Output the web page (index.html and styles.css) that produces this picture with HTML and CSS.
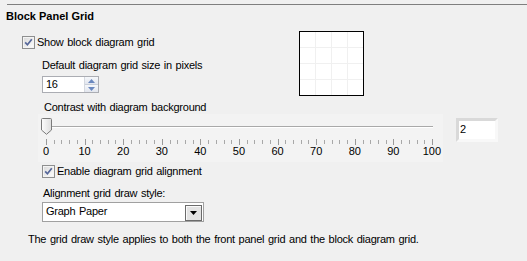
FILE: index.html
```html
<!DOCTYPE html>
<html>
<head>
<meta charset="utf-8">
<link rel="stylesheet" href="styles.css">
</head>
<body>
<div class="rule"></div>
<div class="title">Block Panel Grid</div>
<div class="top">
  <div class="left">
    <div class="check">
      <svg class="cb" width="13" height="13" viewBox="0 0 13 13"><defs><linearGradient id="g1" x1="0" y1="0" x2="1" y2="1"><stop offset="0" stop-color="#dcdcdc"/><stop offset="1" stop-color="#fbfbfb"/></linearGradient></defs><rect x="0.5" y="0.5" width="12" height="12" fill="#f4f4f4" stroke="#8e8f8f"/><rect x="2" y="2" width="9" height="9" fill="url(#g1)"/><path d="M3.2 6.4 L5.4 8.8 L9.8 3.2" fill="none" stroke="#56679a" stroke-width="1.7"/></svg>
      <span>Show block diagram grid</span>
    </div>
    <div class="sub">
      <div class="lbl">Default diagram grid size in pixels</div>
      <div class="spin">
        <span class="val">16</span>
        <span class="arrows">
          <span class="btn"><svg width="7" height="4" viewBox="0 0 7 4"><path d="M0 4 L3.5 0 L7 4Z" fill="#6a88bf"/></svg></span>
          <span class="btn"><svg width="7" height="4" viewBox="0 0 7 4"><path d="M0 0 L3.5 4 L7 0Z" fill="#6a88bf"/></svg></span>
        </span>
      </div>
    </div>
  </div>
  <div class="preview"></div>
</div>
<div class="contrast-lbl">Contrast with diagram background</div>
<div class="slider-row">
  <div class="slider">
    <div class="track"></div>
    <svg class="thumb" width="11" height="17" viewBox="0 0 11 17"><defs><linearGradient id="g2" x1="0" y1="0" x2="1" y2="0"><stop offset="0" stop-color="#fdfdfd"/><stop offset="1" stop-color="#dedede"/></linearGradient></defs><path d="M0.5 1.5 Q0.5 0.5 1.5 0.5 L9.5 0.5 Q10.5 0.5 10.5 1.5 L10.5 12 L5.5 16.3 L0.5 12 Z" fill="url(#g2)" stroke="#7a7a7a"/></svg>
    <svg class="ticks" width="390" height="6" viewBox="0 0 390 6"><path d="M0.5 0v6M39.5 0v6M77.5 0v6M116.5 0v6M154.5 0v6M193.5 0v6M232.5 0v6M270.5 0v6M309.5 0v6M347.5 0v6M386.5 0v6" stroke="#9a9a9a"/><path d="M8.5 1v4M15.5 1v4M23.5 1v4M31.5 1v4M46.5 1v4M54.5 1v4M62.5 1v4M69.5 1v4M85.5 1v4M93.5 1v4M100.5 1v4M108.5 1v4M124.5 1v4M131.5 1v4M139.5 1v4M147.5 1v4M162.5 1v4M170.5 1v4M178.5 1v4M185.5 1v4M201.5 1v4M208.5 1v4M216.5 1v4M224.5 1v4M239.5 1v4M247.5 1v4M255.5 1v4M262.5 1v4M278.5 1v4M286.5 1v4M293.5 1v4M301.5 1v4M317.5 1v4M324.5 1v4M332.5 1v4M340.5 1v4M355.5 1v4M363.5 1v4M371.5 1v4M378.5 1v4" stroke="#a8a8a8"/></svg>
    <div class="scale"><span>0</span><span>10</span><span>20</span><span>30</span><span>40</span><span>50</span><span>60</span><span>70</span><span>80</span><span>90</span><span>100</span></div>
  </div>
  <div class="num">2</div>
</div>
<div class="check check2">
  <svg class="cb" width="13" height="13" viewBox="0 0 13 13"><defs><linearGradient id="g3" x1="0" y1="0" x2="1" y2="1"><stop offset="0" stop-color="#dcdcdc"/><stop offset="1" stop-color="#fbfbfb"/></linearGradient></defs><rect x="0.5" y="0.5" width="12" height="12" fill="#f4f4f4" stroke="#8e8f8f"/><rect x="2" y="2" width="9" height="9" fill="url(#g3)"/><path d="M3.2 6.4 L5.4 8.8 L9.8 3.2" fill="none" stroke="#56679a" stroke-width="1.7"/></svg>
  <span>Enable diagram grid alignment</span>
</div>
<div class="align-lbl">Alignment grid draw style:</div>
<div class="dropdown">
  <span class="dd-val">Graph Paper</span>
  <span class="dd-btn"><svg width="7" height="4" viewBox="0 0 7 4"><path d="M0 0 L3.5 4 L7 0Z" fill="#000"/></svg></span>
</div>
<div class="note">The grid draw style applies to both the front panel grid and the block diagram grid.</div>
</body>
</html>
```
FILE: styles.css
```css
* { box-sizing: border-box; }
html, body { margin: 0; padding: 0; }
body {
  width: 527px;
  height: 261px;
  overflow: hidden;
  background: #f0f0f0;
  color: #000;
  font-family: "Liberation Sans", Arial, sans-serif;
  font-size: 11px;
  line-height: 13px;
  letter-spacing: -0.25px;
  word-spacing: 0.9px;
}
.rule { margin: 4px 0 0 7px; height: 1px; background: #7f7f7f; }
.title { margin: 5px 0 0 6px; font-weight: bold; letter-spacing: 0; word-spacing: 0; }
.top { display: flex; }
.left { width: 299px; padding: 13px 0 0 22px; }
.check { display: flex; align-items: center; gap: 2px; height: 13px; }
.cb { flex: none; display: block; }
.sub { padding-left: 20px; }
.sub .lbl { margin-top: 10px; }
.spin {
  margin-top: 4px;
  width: 57px;
  height: 17px;
  border: 1px solid #abadb3;
  background: #fff;
  display: flex;
}
.spin .val { flex: 1; padding-left: 3px; line-height: 15px; }
.arrows { width: 14px; display: flex; flex-direction: column; border-left: 1px solid #d5d9e0; }
.btn {
  flex: 1;
  display: flex;
  align-items: center;
  justify-content: center;
  background: linear-gradient(#f6f8fb, #e2e6ee);
}
.btn + .btn { border-top: 1px solid #c9cfd9; }
.btn svg { display: block; }
.preview {
  margin-top: 8px;
  width: 65px;
  height: 65px;
  border: 1px solid #000;
  background-color: #fff;
  background-image:
    linear-gradient(to right, #f0f0f0 1px, transparent 1px),
    linear-gradient(to bottom, #f0f0f0 1px, transparent 1px);
  background-size: 16px 16px;
  background-position: 15px 15px;
}
.contrast-lbl { margin: 5px 0 0 44px; }
.slider-row { display: flex; align-items: flex-start; }
.slider {
  position: relative;
  margin-left: 38px;
  width: 405px;
  height: 48px;
  background: #f3f3f3;
}
.track {
  margin: 12px 10px 0 6px;
  height: 2px;
  border-top: 1px solid #a9a9a9;
  background: #fff;
}
.thumb { position: absolute; left: 3px; top: 4px; display: block; }
.ticks { display: block; margin: 11px 0 0 8px; }
.scale { display: flex; width: 424.6px; margin-left: -11.3px; }
.scale span { flex: 1; text-align: center; letter-spacing: 0; }
.num {
  margin: 4px 0 0 13px;
  width: 42px;
  height: 24px;
  background: #fff;
  border-style: solid;
  border-width: 3px;
  border-color: #d9d9d9 #f8f8f8 #f8f8f8 #d9d9d9;
  padding-left: 1px;
  line-height: 17px;
}
.check2 { margin: 3px 0 0 42px; }
.align-lbl { margin: 9px 0 0 43px; }
.dropdown {
  margin: 2px 0 0 42px;
  width: 162px;
  height: 20px;
  border: 1px solid #a0a0a0;
  background: #fff;
  display: flex;
  align-items: flex-start;
}
.dd-val { flex: 1; padding-left: 3px; line-height: 16px; }
.dd-btn {
  margin: 2px 1px 0 0;
  width: 17px;
  height: 16px;
  border: 1px solid #6b6b6b;
  box-shadow: inset 1px 1px 0 #fafafa;
  background: #e3e3e3;
  display: flex;
  align-items: center;
  justify-content: center;
}
.dd-btn svg { display: block; }
.note { margin: 11px 0 0 28px; }
```
